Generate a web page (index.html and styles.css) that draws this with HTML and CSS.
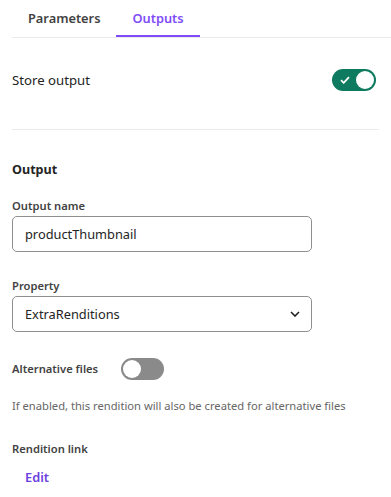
FILE: index.html
```html
<!DOCTYPE html>
<html lang="en">

<head>
    <meta charset="UTF-8" />
    <meta name="viewport" content="width=device-width, initial-scale=1.0" />
    <title>Rendition Outputs</title>
    <link rel="stylesheet" href="styles.css">
</head>

<body>
    <div class="tabs">
        <div class="tab">Parameters</div>
        <div class="tab active">Outputs</div>
    </div>

    <div class="panel">
        <div class="switch-row">
            <span class="switch-label">Store output</span>
            <span class="toggle on">
                <svg class="check" width="10" height="8" viewBox="0 0 10 8">
                    <path d="M1 4.2 L3.7 6.8 L9 1.2" fill="none" stroke="#fff" stroke-width="1.8" />
                </svg>
                <span class="knob"></span>
            </span>
        </div>

        <hr class="divider" />

        <h2 class="section-title">Output</h2>

        <label class="field-label" for="output-name">Output name</label>
        <input class="text-input" type="text" id="output-name" value="productThumbnail" />

        <label class="field-label spaced" for="property">Property</label>
        <div class="select-box" id="property">
            <span>ExtraRenditions</span>
            <svg width="10" height="6" viewBox="0 0 10 6">
                <path d="M1 1 L5 5 L9 1" fill="none" stroke="#222" stroke-width="1.6" />
            </svg>
        </div>

        <div class="alt-row">
            <span class="field-label inline">Alternative files</span>
            <span class="toggle off">
                <span class="knob"></span>
            </span>
        </div>
        <p class="help">If enabled, this rendition will also be created for alternative files</p>

        <div class="field-label link-label">Rendition link</div>
        <a class="edit-link" href="#">Edit</a>
    </div>
</body>

</html>
```

FILE: styles.css
```css
* {
    padding: 0;
    margin: 0;
    box-sizing: border-box;
}

body {
    background-color: #fff;
    font-family: 'Noto Sans', 'Open Sans', sans-serif;
    font-size: 13px;
    color: #242424;
}

.tabs {
    display: flex;
    margin-left: 12px;
    border-bottom: 1px solid #edebe9;
    height: 38px;
}

.tab {
    padding: 0 16px;
    line-height: 36px;
    font-size: 12.8px;
    font-weight: 600;
    color: #424242;
    border-bottom: 2px solid transparent;
}

.tab.active {
    color: #7f4cf7;
    border-bottom-color: #7f4cf7;
}

.panel {
    padding: 0 12px;
}

.switch-row {
    display: flex;
    justify-content: space-between;
    align-items: center;
    margin-top: 31px;
    padding-right: 3px;
}

.switch-label {
    font-size: 13.2px;
}

.toggle {
    position: relative;
    display: flex;
    align-items: center;
    width: 44px;
    height: 22px;
    border-radius: 11px;
}

.toggle.on {
    background-color: #0e7a5f;
    justify-content: flex-end;
    padding: 0 2px;
}

.toggle.off {
    width: 43px;
    background-color: #8a8a8a;
    padding: 0 2px;
}

.knob {
    width: 18px;
    height: 18px;
    border-radius: 50%;
    background: #fff;
}

.check {
    position: absolute;
    left: 8px;
    top: 7px;
}

.divider {
    border: none;
    border-top: 1px solid #ebebeb;
    margin-top: 38px;
}

.section-title {
    font-size: 12.6px;
    font-weight: 700;
    line-height: 20px;
    margin-top: 30px;
}

.field-label {
    display: block;
    font-size: 11.2px;
    font-weight: 600;
    line-height: 16px;
    color: #424242;
    margin-top: 18px;
    margin-bottom: 2px;
}

.field-label.spaced {
    margin-top: 26px;
}

.text-input,
.select-box {
    width: 300px;
    height: 36px;
    border: 1px solid #8f8f8f;
    border-radius: 5px;
    padding: 0 12px;
    font-family: inherit;
    font-size: 12.8px;
    color: #242424;
}

.select-box {
    display: flex;
    justify-content: space-between;
    align-items: center;
    padding-right: 11px;
}

.alt-row {
    display: flex;
    align-items: center;
    gap: 23px;
    margin-top: 26px;
}

.field-label.inline {
    margin: 0;
}

.help {
    font-size: 11.2px;
    line-height: 16px;
    color: #666;
    margin-top: 18px;
}

.link-label {
    margin-top: 27px;
}

.edit-link {
    display: inline-block;
    margin-top: 8px;
    margin-left: 13px;
    font-size: 12.8px;
    font-weight: 600;
    line-height: 20px;
    color: #6b3fe0;
    text-decoration: none;
}
```
